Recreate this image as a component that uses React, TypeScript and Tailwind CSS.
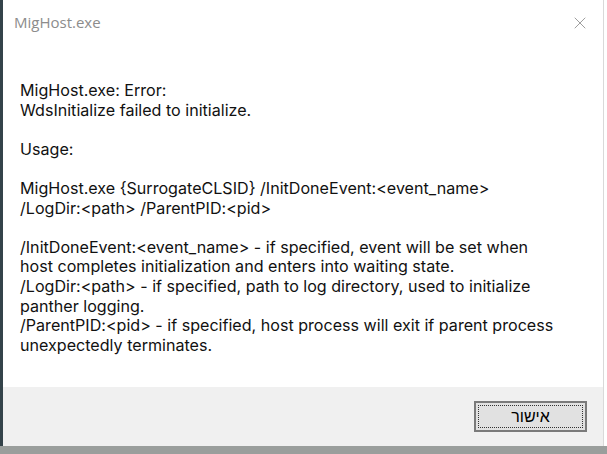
import { X } from "lucide-react";

const lines: string[][] = [
  ["MigHost.exe: Error:", "WdsInitialize failed to initialize."],
  ["Usage:"],
  ["MigHost.exe {SurrogateCLSID} /InitDoneEvent:<event_name>", "/LogDir:<path> /ParentPID:<pid>"],
  [
    "/InitDoneEvent:<event_name> - if specified, event will be set when",
    "host completes initialization and enters into waiting state.",
    "/LogDir:<path> - if specified, path to log directory, used to initialize",
    "panther logging.",
    "/ParentPID:<pid> - if specified, host process will exit if parent process",
    "unexpectedly terminates.",
  ],
];

export default function App() {
  return (
    <div className="w-[607px] h-[454px] flex flex-col bg-[#8d9291] overflow-hidden">
      <div className="flex flex-1 min-h-0">
        {/* dark desktop strip on the left */}
        <div className="w-[3px] bg-[#34434a]" />

        <div className="flex-1 flex flex-col bg-white border-r border-[#d9d9d9]">
          {/* title bar */}
          <div className="h-[46px] flex items-start justify-between pl-[11px] pr-[13px] pt-[11px] font-['Open_Sans',sans-serif]">
            <span className="text-[15px] text-[#8c8c8c] leading-[22px]">MigHost.exe</span>
            <X className="w-[20px] h-[20px] mt-[2px] text-[#8a8a8a]" strokeWidth={1} />
          </div>

          {/* message */}
          <div className="flex-1 pl-[17px] pt-[35px] text-[16.1px] leading-[19.6px] text-[#111] flex flex-col gap-[19.6px] font-['Inter',sans-serif]">
            {lines.map((block, i) => (
              <div key={i}>
                {block.map((l) => (
                  <div key={l} className="whitespace-pre">{l}</div>
                ))}
              </div>
            ))}
          </div>

          {/* footer */}
          <div className="h-[59px] bg-[#f0f0f0] flex items-center justify-end pr-[16px]">
            <button className="w-[113px] h-[31px] bg-[#e1e1e1] border-2 border-[#7a7a7a] p-[2px] flex">
              <span
                dir="rtl"
                className="flex-1 flex items-center justify-center border border-dotted border-[#333] text-[16px] leading-[18px] text-black font-['Liberation_Sans','DejaVu_Sans',sans-serif]"
              >
                אישור
              </span>
            </button>
          </div>
        </div>
        <div className="w-[3px] bg-white" />
      </div>
      <div className="h-[8px] bg-[#9a9e9c]" />
    </div>
  );
}
